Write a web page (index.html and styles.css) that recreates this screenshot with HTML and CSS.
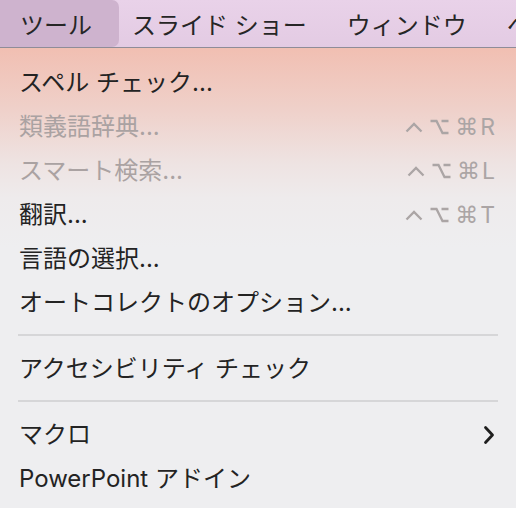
FILE: index.html
```html
<!DOCTYPE html>
<html lang="ja">
<head>
<meta charset="utf-8">
<link rel="stylesheet" href="styles.css">
</head>
<body>
<div class="screen">
  <div class="menubar">
    <div class="mb-item active">ツール</div>
    <div class="mb-item first">スライド ショー</div>
    <div class="mb-item">ウィンドウ</div>
    <div class="mb-item">ヘルプ</div>
  </div>
  <div class="menu">
    <div class="row"><span class="label">スペル チェック...</span></div>
    <div class="row disabled"><span class="label">類義語辞典...</span>
      <span class="sc">
        <svg class="ctl" viewBox="0 0 18 12" width="18" height="12"><path d="M1.5 10.5 L9 3 L16.5 10.5" fill="none" stroke="currentColor" stroke-width="2.3"/></svg>
        <svg class="opt" viewBox="0 0 19 16" width="19" height="16"><path d="M0.5 2 H6.5 L12.5 14 H18.5 M11.5 2 H18.5" fill="none" stroke="currentColor" stroke-width="2.3"/></svg>
        <span class="cmd">⌘</span><span class="key">R</span>
      </span>
    </div>
    <div class="row disabled"><span class="label">スマート検索...</span>
      <span class="sc">
        <svg class="ctl" viewBox="0 0 18 12" width="18" height="12"><path d="M1.5 10.5 L9 3 L16.5 10.5" fill="none" stroke="currentColor" stroke-width="2.3"/></svg>
        <svg class="opt" viewBox="0 0 19 16" width="19" height="16"><path d="M0.5 2 H6.5 L12.5 14 H18.5 M11.5 2 H18.5" fill="none" stroke="currentColor" stroke-width="2.3"/></svg>
        <span class="cmd">⌘</span><span class="key">L</span>
      </span>
    </div>
    <div class="row"><span class="label">翻訳...</span>
      <span class="sc">
        <svg class="ctl" viewBox="0 0 18 12" width="18" height="12"><path d="M1.5 10.5 L9 3 L16.5 10.5" fill="none" stroke="currentColor" stroke-width="2.3"/></svg>
        <svg class="opt" viewBox="0 0 19 16" width="19" height="16"><path d="M0.5 2 H6.5 L12.5 14 H18.5 M11.5 2 H18.5" fill="none" stroke="currentColor" stroke-width="2.3"/></svg>
        <span class="cmd">⌘</span><span class="key">T</span>
      </span>
    </div>
    <div class="row"><span class="label">言語の選択...</span></div>
    <div class="row"><span class="label">オートコレクトのオプション...</span></div>
    <div class="sep"></div>
    <div class="row"><span class="label">アクセシビリティ チェック</span></div>
    <div class="sep"></div>
    <div class="row"><span class="label">マクロ</span>
      <svg class="chev" viewBox="0 0 12 20" width="12" height="20"><path d="M2.5 2.5 L9.5 10 L2.5 17.5" fill="none" stroke="#1e1e1e" stroke-width="2.8" stroke-linecap="round" stroke-linejoin="round"/></svg>
    </div>
    <div class="row"><span class="label">PowerPoint アドイン</span></div>
  </div>
</div>
</body>
</html>
```
FILE: styles.css
```css
html, body {
  margin: 0;
  padding: 0;
}
body {
  width: 516px;
  height: 508px;
  overflow: hidden;
  background: #eeeef0;
  font-family: Inter, "Noto Sans CJK JP", sans-serif;
  -webkit-font-smoothing: antialiased;
}
.screen {
  width: 516px;
  height: 508px;
  display: flex;
  flex-direction: column;
}
.menubar {
  height: 47px;
  flex: none;
  display: flex;
  align-items: center;
  background: linear-gradient(#e9d2e9, #e3cbe3);
  border-bottom: 1px solid #8f8c98;
  white-space: nowrap;
  overflow: hidden;
  color: #262626;
  font-size: 24px;
}
.mb-item {
  height: 47px;
  display: flex;
  align-items: center;
  margin-right: 40px;
  flex: none;
}
.mb-item.active {
  padding: 0 27px 0 20px;
  margin-right: 0;
  background: #ceb3ce;
  border-radius: 0 7px 7px 0;
}
.mb-item.first {
  margin-left: 13px;
}
.menu {
  flex: 1;
  padding: 13px 18px 0 18px;
  background: linear-gradient(#f1bfb2 0px, #efd0c9 60px, #eee3e2 115px, #eeebec 150px, #eeeef0 200px);
  color: #232323;
  font-size: 24px;
}
.row {
  height: 44px;
  display: flex;
  align-items: center;
  justify-content: space-between;
  padding: 0 3px 0 1px;
  white-space: nowrap;
}
.label {
  line-height: 1;
}
.row.disabled .label {
  color: #aaa2a2;
}
.sc {
  display: flex;
  align-items: center;
  color: #aba5a5;
  line-height: 1;
}
.ctl {
  margin-right: 7px;
}
.opt {
  margin-right: 6px;
}
.cmd {
  font-family: "DejaVu Sans", sans-serif;
  font-size: 23px;
  margin-right: 2px;
}
.key {
  font-family: Inter, sans-serif;
  font-size: 23px;
}
.sep {
  height: 2px;
  margin: 9px 0 11px;
  background: #d6d6d8;
}
.chev {
  margin-right: 0;
}
```
